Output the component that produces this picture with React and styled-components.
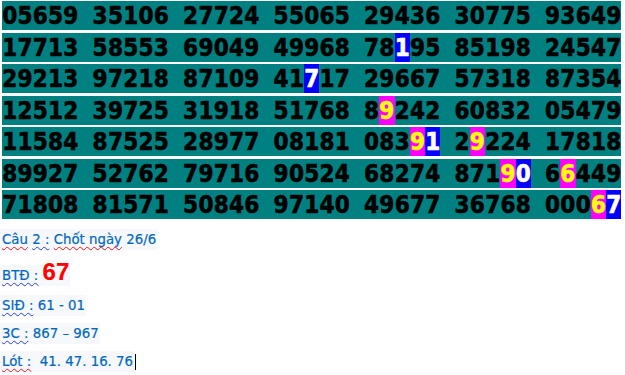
import React from "react";
import styled, { createGlobalStyle } from "styled-components";

const Global = createGlobalStyle`
  html, body { margin: 0; padding: 0; background: #ffffff; }
  body { font-family: "DejaVu Sans", sans-serif; }
`;

const Page = styled.div`
  padding: 1px 0 0 2px;
`;

const Board = styled.div`
  display: flex;
  flex-direction: column;
  gap: 2.5px;
  width: 619px;
`;

const Row = styled.div`
  display: flex;
  gap: 14px;
  height: 29px;
  background: #008080;
  font-family: "DejaVu Sans Condensed", "DejaVu Sans", sans-serif;
  font-stretch: condensed;
  font-weight: bold;
  font-size: 24px;
`;

const Group = styled.span`
  display: flex;
  height: 100%;
`;

const toneBg = { b: "#0000ff", m: "#ff00ff" };
const toneFg = { b: "#ffffff", m: "#ffff00" };

const Digit = styled.span`
  width: 15.3px;
  height: 100%;
  display: flex;
  align-items: center;
  justify-content: center;
  padding-top: 1px;
  box-sizing: border-box;
  -webkit-text-stroke: 0.6px currentColor;
  background: ${(p) => (p.$tone ? toneBg[p.$tone] : "transparent")};
  color: ${(p) => (p.$tone ? toneFg[p.$tone] : "#000000")};
`;

const Notes = styled.div`
  font-family: "DejaVu Sans", "Verdana", sans-serif;
  font-size: 13.33px;
  color: #0068bd;
  margin-left: -2px;
`;

const Line = styled.p`
  margin: ${(p) => p.$top}px 0 0 0;
  line-height: 20px;
  white-space: pre;
`;

const Shade = styled.span`
  background: #f7f8fc;
  padding: 3px 1px 3px 2px;
  -webkit-text-stroke: 0.2px currentColor;
`;

const Wavy = styled.span`
  text-decoration-line: underline;
  text-decoration-style: wavy;
  text-decoration-color: ${(p) => p.$c};
  text-decoration-thickness: 1px;
  text-underline-offset: 2px;
  text-decoration-skip-ink: none;
`;

const Big = styled.span`
  font-family: "Liberation Sans", Arial, sans-serif;
  font-weight: bold;
  font-size: 24px;
  line-height: 0;
  color: #ff0000;
`;

const Caret = styled.span`
  display: inline-block;
  width: 1px;
  height: 16px;
  background: #000000;
  vertical-align: -4px;
  margin-left: 1px;
`;

const rows = [
  "05659 35106 27724 55065 29436 30775 93649",
  "17713 58553 69049 49968 78195 85198 24547",
  "29213 97218 87109 41717 29667 57318 87354",
  "12512 39725 31918 51768 89242 60832 05479",
  "11584 87525 28977 08181 08391 29224 17818",
  "89927 52762 79716 90524 68274 87190 66449",
  "71808 81571 50846 97140 49677 36768 00067",
];

const marks = {
  "1-4-2": "b",
  "2-3-2": "b",
  "3-4-1": "m",
  "4-4-3": "m",
  "4-4-4": "b",
  "4-5-1": "m",
  "5-5-3": "m",
  "5-5-4": "b",
  "5-6-1": "m",
  "6-6-3": "m",
  "6-6-4": "b",
};

const RED = "#e8141e";
const BLUE = "#2b3fd6";

export default function App() {
  return (
    <>
      <Global />
      <Page>
        <Board>
          {rows.map((r, ri) => (
            <Row key={ri}>
              {r.split(" ").map((g, gi) => (
                <Group key={gi}>
                  {g.split("").map((d, di) => (
                    <Digit key={di} $tone={marks[`${ri}-${gi}-${di}`]}>
                      {d}
                    </Digit>
                  ))}
                </Group>
              ))}
            </Row>
          ))}
        </Board>
        <Notes>
          <Line $top={11.4}>
            <Shade>
              <Wavy $c={RED}>Câu</Wavy> <Wavy $c={BLUE}>2 :</Wavy>{" "}
              <Wavy $c={RED}>Chốt ngày</Wavy> 26/6
            </Shade>
          </Line>
          <Line $top={16}>
            <Shade>
              <Wavy $c={BLUE}>BTĐ :</Wavy> <Big>67</Big>
            </Shade>
          </Line>
          <Line $top={10}>
            <Shade>
              <Wavy $c={BLUE}>SIĐ :</Wavy> 61 - 01
            </Shade>
          </Line>
          <Line $top={7.5}>
            <Shade>
              <Wavy $c={BLUE}>3C :</Wavy> 867 – 967
            </Shade>
          </Line>
          <Line $top={8}>
            <Shade>
              <Wavy $c={RED}>Lót :</Wavy>  41. 47. 16. 76
            </Shade>
            <Caret />
          </Line>
        </Notes>
      </Page>
    </>
  );
}
